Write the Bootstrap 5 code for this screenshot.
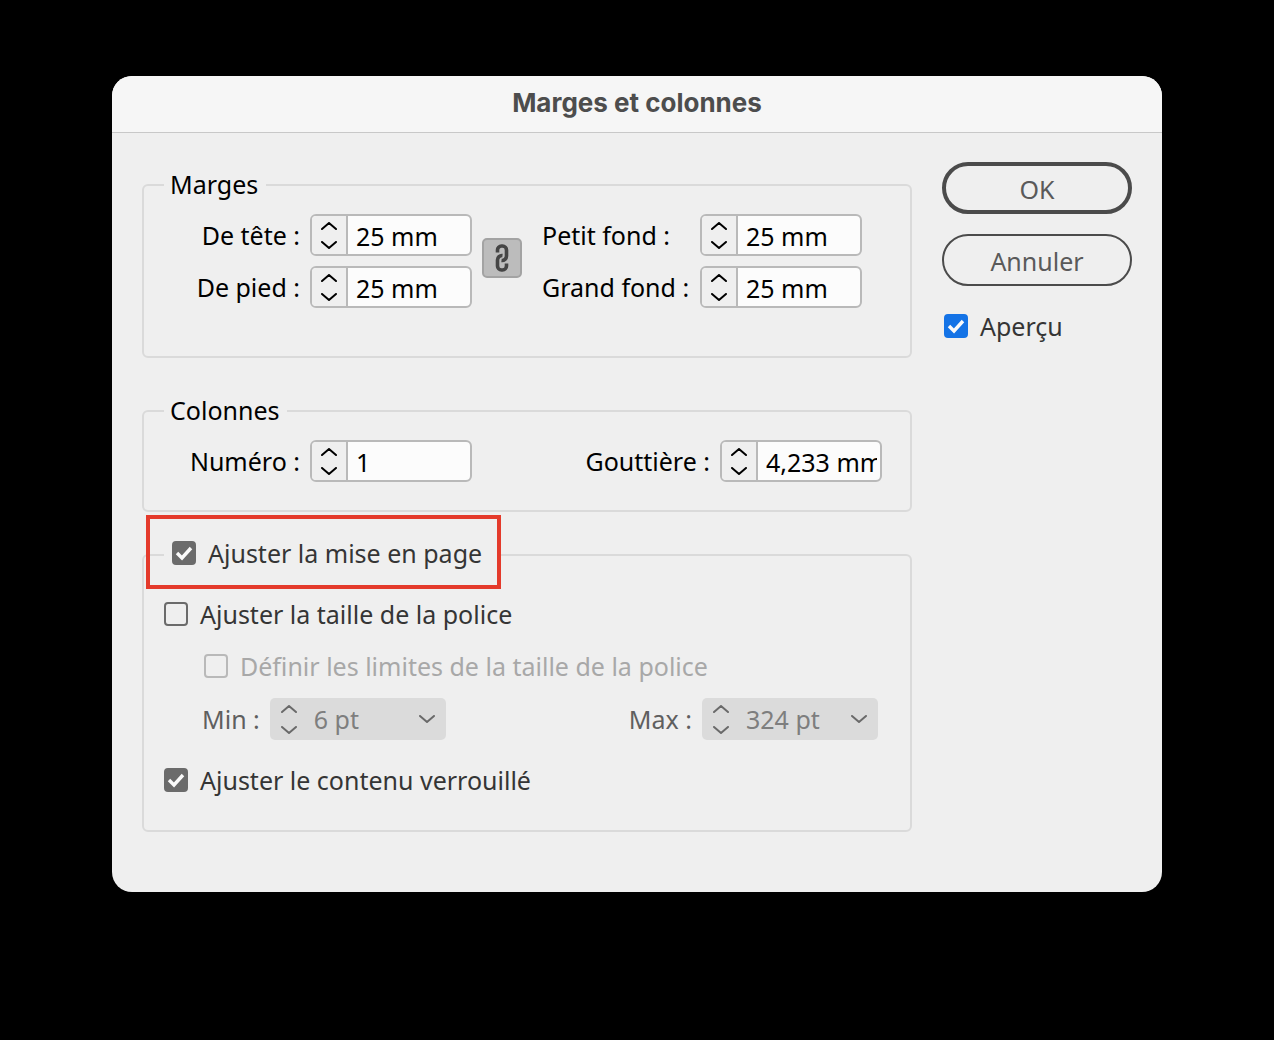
<!DOCTYPE html>
<html lang="fr">
<head>
<meta charset="utf-8">
<meta name="viewport" content="width=device-width, initial-scale=1">
<title>Marges et colonnes</title>
<link href="https://cdn.jsdelivr.net/npm/bootstrap@5.3.0/dist/css/bootstrap.min.css" rel="stylesheet">
<style>
  body { background: #000; color: #000; font-family: "Noto Sans", "Open Sans", sans-serif; font-size: 25px; line-height: 32px; }
  .stage { padding: 76px 112px; }
  .dialog-panel { background: #efefef; border-radius: 20px; overflow: hidden; }
  .dialog-title { background: #f6f6f6; border-bottom: 1px solid #c8c8c8; color: #4d4d4d; font: 700 26px/36px Inter, sans-serif; padding: 9px 16px 11px; margin: 0; }
  .dialog-content { padding: 29px 30px 60px; gap: 30px; }
  .groups { padding-top: 7px; }
  .actions { width: 190px; gap: 20px; }

  .group-box { border: 2px solid #dadada; border-radius: 6px; }
  .group-box > legend { float: none; width: auto; font-size: 25px; line-height: 30px; margin: 0 0 0 20px; padding: 0 8px 2px 6px; }
  .box-margins { padding: 13px 48px 48px 0; }
  .box-columns { margin-top: 37px; padding: 13px 28px 28px 0; }
  .box-layout { margin-top: 25px; padding: 25px 32px 34px 20px; }

  .margin-grid { display: grid; grid-template-columns: 156px 162px 40px 1fr 162px; gap: 10px; }
  .margin-grid label { line-height: 42px; }
  .link-cell { grid-column: 3; grid-row: 1 / span 2; padding-top: 24px; }
  .inner-label { padding-left: 10px; }
  .field-line { gap: 10px; }
  .number-label { width: 156px; }

  .stepper-field { width: 162px; height: 42px; border: 2px solid #b9b9b9; border-radius: 6px; overflow: hidden; background: #fcfcfc; }
  .stepper { width: 34px; background: #efefef; }
  .stepper button { border: 0; background: transparent; padding: 0; color: inherit; line-height: 0; flex: 1; }
  .stepper svg { width: 16px; height: 8px; fill: none; stroke: currentColor; stroke-width: 2; stroke-linecap: round; stroke-linejoin: round; }
  .stepper-field input { min-width: 0; flex: 1; border: 0; border-left: 2px solid #b9b9b9; background: transparent; color: #000; padding: 2px 0 0 8px; margin-right: 3px; line-height: 32px; }

  .link-toggle { width: 40px; height: 40px; border: 2px solid #a3a3a3; border-radius: 5px; background: #bcbcbc; padding: 0; line-height: 0; }

  .check-line { gap: 12px; color: #353535; line-height: 32px; }
  .check-line .form-check-input { width: 24px; height: 24px; margin: 0; flex: none; border: 2px solid #6b6b6b; border-radius: 4px; background-color: transparent; }
  .check-line .form-check-input:checked { border-color: #6b6b6b; background-color: #6b6b6b; background-size: 24px 24px; background-image: url("data:image/svg+xml,%3csvg xmlns='http://www.w3.org/2000/svg' viewBox='0 0 24 24'%3e%3cpath d='M5 12L10 17L19 7' fill='none' stroke='%23fafafa' stroke-width='3.400'/%3e%3c/svg%3e"); }
  .check-line .form-check-input.is-preview:checked { border-color: #1473e6; background-color: #1473e6; }
  .check-line .form-check-input:disabled { border-color: #b9b9b9; opacity: 1; }
  .check-line .form-check-input:disabled ~ label { color: #a8a8a8; opacity: 1; }
  .sub-option { margin: 20px 0 0 40px; }

  .group-box > .callout { position: relative; margin-left: 0; padding: 0 19px 4px 8px; }
  .callout::after { content: ""; position: absolute; inset: -22px 0 -16px -18px; border: 4px solid #e43a2b; pointer-events: none; }

  .limits { padding-left: 38px; margin: 16px 0 24px; color: #5f5f5f; }
  .combo-field { width: 176px; height: 42px; border-radius: 5px; background: #dbdbdb; color: #6a6a6a; overflow: hidden; }
  .combo-field .stepper { width: 38px; background: transparent; }
  .combo-field select, .combo-field select:disabled { flex: 1; min-width: 0; border: 0; background-color: transparent; color: #7e7e7e; opacity: 1; font-size: 25px; line-height: 32px; padding: 4px 36px 4px 6px; background-size: 16px 8px; background-position: right 11px center; background-image: url("data:image/svg+xml,%3csvg xmlns='http://www.w3.org/2000/svg' viewBox='0 0 16 8'%3e%3cpath d='M1 1L8 7L15 1' fill='none' stroke='%236a6a6a' stroke-width='2' stroke-linecap='round' stroke-linejoin='round'/%3e%3c/svg%3e"); }

  .pill { height: 52px; border: 2px solid #4b4b4b; border-radius: 26px; color: #5a5a5a; font-size: 25px; line-height: 32px; padding: 1px 0 0; }
  .pill-main { border-width: 4px; }
  .preview-line { padding-left: 2px; margin-top: 4px; }
</style>
<script src="https://cdn.jsdelivr.net/npm/bootstrap@5.3.0/dist/js/bootstrap.bundle.min.js"></script>
</head>
<body>
<main class="stage">
  <form class="dialog-panel" role="dialog" aria-labelledby="dialog-title">
    <h1 class="dialog-title text-center" id="dialog-title">Marges et colonnes</h1>
    <div class="dialog-content d-flex align-items-start">
      <div class="groups flex-grow-1">

        <fieldset class="group-box box-margins">
          <legend>Marges</legend>
          <div class="margin-grid">
            <label class="text-end" for="top">De tête :</label>
            <div class="stepper-field d-flex">
              <div class="stepper d-flex flex-column">
                <button type="button" aria-label="Augmenter"><svg viewBox="0 0 16 8"><path d="M1 7L8 1L15 7"/></svg></button>
                <button type="button" aria-label="Diminuer"><svg viewBox="0 0 16 8"><path d="M1 1L8 7L15 1"/></svg></button>
              </div>
              <input type="text" id="top" value="25 mm">
            </div>
            <div class="link-cell">
              <button type="button" class="link-toggle" aria-label="Lier les marges" aria-pressed="true">
                <svg width="16" height="30" viewBox="0 0 16 30" fill="none" stroke="#454545" stroke-width="3.600">
                  <path d="M3.500 9.500V7a4 4 0 0 1 4-4h1a4 4 0 0 1 4 4V13a4.500 4.500 0 0 1-5 4.500"/>
                  <path d="M12.500 20.500V23a4 4 0 0 1-4 4h-1a4 4 0 0 1-4-4V17a4.500 4.500 0 0 1 5-4.500"/>
                </svg>
              </button>
            </div>
            <label class="inner-label" for="inside">Petit fond :</label>
            <div class="stepper-field d-flex">
              <div class="stepper d-flex flex-column">
                <button type="button" aria-label="Augmenter"><svg viewBox="0 0 16 8"><path d="M1 7L8 1L15 7"/></svg></button>
                <button type="button" aria-label="Diminuer"><svg viewBox="0 0 16 8"><path d="M1 1L8 7L15 1"/></svg></button>
              </div>
              <input type="text" id="inside" value="25 mm">
            </div>
            <label class="text-end" for="bottom">De pied :</label>
            <div class="stepper-field d-flex">
              <div class="stepper d-flex flex-column">
                <button type="button" aria-label="Augmenter"><svg viewBox="0 0 16 8"><path d="M1 7L8 1L15 7"/></svg></button>
                <button type="button" aria-label="Diminuer"><svg viewBox="0 0 16 8"><path d="M1 1L8 7L15 1"/></svg></button>
              </div>
              <input type="text" id="bottom" value="25 mm">
            </div>
            <label class="inner-label" for="outside">Grand fond :</label>
            <div class="stepper-field d-flex">
              <div class="stepper d-flex flex-column">
                <button type="button" aria-label="Augmenter"><svg viewBox="0 0 16 8"><path d="M1 7L8 1L15 7"/></svg></button>
                <button type="button" aria-label="Diminuer"><svg viewBox="0 0 16 8"><path d="M1 1L8 7L15 1"/></svg></button>
              </div>
              <input type="text" id="outside" value="25 mm">
            </div>
          </div>
        </fieldset>

        <fieldset class="group-box box-columns">
          <legend>Colonnes</legend>
          <div class="field-line d-flex align-items-center">
            <label class="number-label text-end" for="count">Numéro :</label>
            <div class="stepper-field d-flex">
              <div class="stepper d-flex flex-column">
                <button type="button" aria-label="Augmenter"><svg viewBox="0 0 16 8"><path d="M1 7L8 1L15 7"/></svg></button>
                <button type="button" aria-label="Diminuer"><svg viewBox="0 0 16 8"><path d="M1 1L8 7L15 1"/></svg></button>
              </div>
              <input type="text" id="count" value="1">
            </div>
            <label class="ms-auto" for="gutter">Gouttière :</label>
            <div class="stepper-field d-flex">
              <div class="stepper d-flex flex-column">
                <button type="button" aria-label="Augmenter"><svg viewBox="0 0 16 8"><path d="M1 7L8 1L15 7"/></svg></button>
                <button type="button" aria-label="Diminuer"><svg viewBox="0 0 16 8"><path d="M1 1L8 7L15 1"/></svg></button>
              </div>
              <input type="text" id="gutter" value="4,233 mm">
            </div>
          </div>
        </fieldset>

        <fieldset class="group-box box-layout">
          <legend class="callout">
            <span class="check-line d-flex align-items-center">
              <input class="form-check-input" type="checkbox" id="adjust" checked>
              <label for="adjust">Ajuster la mise en page</label>
            </span>
          </legend>
          <div class="check-line d-flex align-items-center">
            <input class="form-check-input" type="checkbox" id="font-size">
            <label for="font-size">Ajuster la taille de la police</label>
          </div>
          <div class="sub-option check-line d-flex align-items-center">
            <input class="form-check-input" type="checkbox" id="font-limits" disabled>
            <label for="font-limits">Définir les limites de la taille de la police</label>
          </div>
          <div class="limits field-line d-flex align-items-center">
            <label for="min">Min :</label>
            <div class="combo-field d-flex">
              <div class="stepper d-flex flex-column">
                <button type="button" disabled aria-label="Augmenter"><svg viewBox="0 0 16 8"><path d="M1 7L8 1L15 7"/></svg></button>
                <button type="button" disabled aria-label="Diminuer"><svg viewBox="0 0 16 8"><path d="M1 1L8 7L15 1"/></svg></button>
              </div>
              <select class="form-select" id="min" disabled><option>6 pt</option></select>
            </div>
            <label class="ms-auto" for="max">Max :</label>
            <div class="combo-field d-flex">
              <div class="stepper d-flex flex-column">
                <button type="button" disabled aria-label="Augmenter"><svg viewBox="0 0 16 8"><path d="M1 7L8 1L15 7"/></svg></button>
                <button type="button" disabled aria-label="Diminuer"><svg viewBox="0 0 16 8"><path d="M1 1L8 7L15 1"/></svg></button>
              </div>
              <select class="form-select" id="max" disabled><option>324 pt</option></select>
            </div>
          </div>
          <div class="check-line d-flex align-items-center">
            <input class="form-check-input" type="checkbox" id="locked" checked>
            <label for="locked">Ajuster le contenu verrouillé</label>
          </div>
        </fieldset>
      </div>

      <div class="actions d-flex flex-column flex-shrink-0">
        <button type="button" class="btn pill pill-main">OK</button>
        <button type="button" class="btn pill">Annuler</button>
        <div class="preview-line check-line d-flex align-items-center">
          <input class="form-check-input is-preview" type="checkbox" id="preview" checked>
          <label for="preview">Aperçu</label>
        </div>
      </div>
    </div>
  </form>
</main>
</body>
</html>
